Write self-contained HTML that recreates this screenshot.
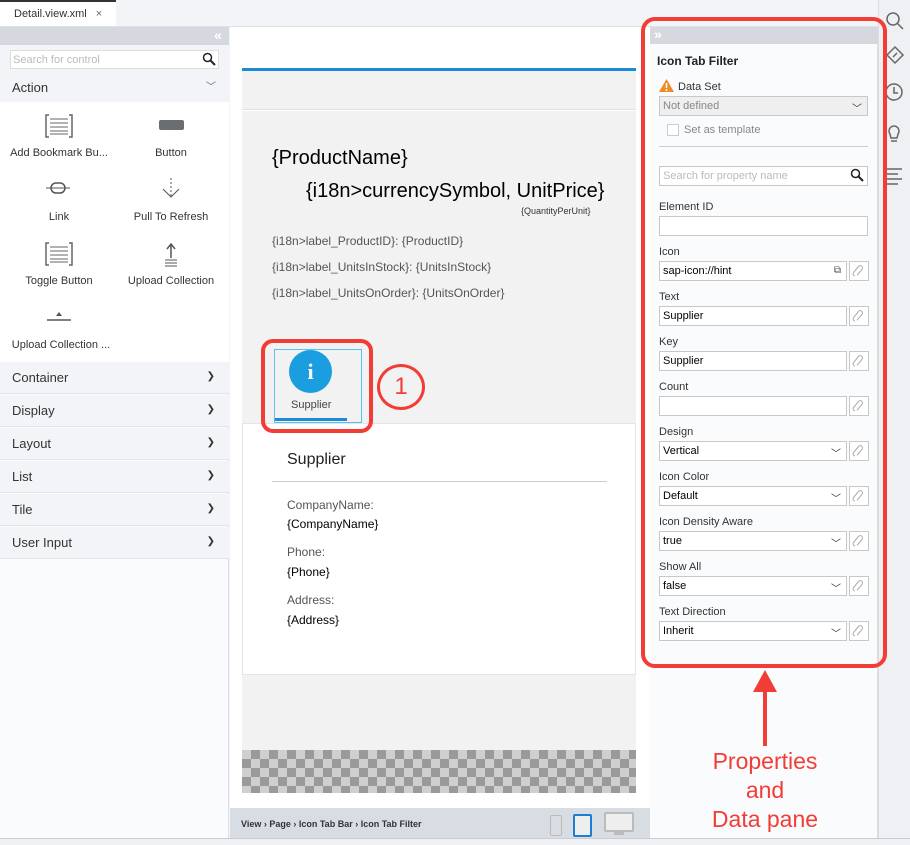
<!DOCTYPE html>
<html><head><style>
*{box-sizing:border-box;margin:0;padding:0}
body{width:910px;height:845px;position:relative;overflow:hidden;background:#f3f4f7;font-family:"Liberation Sans",sans-serif;color:#333}
.a{position:absolute}
.t11{font-size:11px}
.lbl{position:absolute;font-size:11px;color:#333}
.inp{position:absolute;height:20px;background:#fff;border:1px solid #c8c8c8;font-size:11px;padding:3px 3px;color:#000}
.chev{position:absolute;right:5px;top:3px;font-size:10px;color:#333}
.cat{position:absolute;left:0;width:229px;height:32px;background:#f2f4f7;border-bottom:1px solid #e2e4e8;font-size:13px;padding:8px 12px}
.cat span{position:absolute;right:14px;top:9px;font-size:10px}
.it{position:absolute;font-size:11px;text-align:center;width:112px}
</style></head><body>
<div class="a" style="left:0;top:0;width:116px;height:27px;background:#fff;border-top:2px solid #333"></div>
<div class="a t11" style="left:14px;top:8px">Detail.view.xml <span style="margin-left:6px;color:#666">×</span></div>
<div class="a" style="left:0;top:26px;width:878px;height:1px;background:#dde0e5"></div>
<div class="a" style="left:0;top:27px;width:229px;height:818px;background:#fafbfc;border-right:1px solid #dde"></div>
<div class="a" style="left:0;top:27px;width:229px;height:18px;background:#d5d9df"></div>
<div class="a" style="left:214px;top:27px;color:#fff;font-size:14px;font-weight:bold">«</div>
<div class="a" style="left:0;top:45px;width:229px;height:57px;background:#f2f4f7"></div>
<div class="a" style="left:10px;top:50px;width:209px;height:19px;background:#fff;border:1px solid #ddd;font-size:11px;color:#bbb;padding:3px 2px">Search for control</div>
<svg class="a" style="left:202px;top:52px" width="14" height="14"><circle cx="5.5" cy="5.5" r="4" fill="none" stroke="#222" stroke-width="1.5"/><path d="M8.5 8.5L13 13" stroke="#222" stroke-width="2"/></svg>
<div class="a" style="left:12px;top:80px;font-size:13px">Action</div>
<div class="a" style="left:206px;top:78px;font-size:10px;color:#666">﹀</div>
<div class="a" style="left:0;top:102px;width:229px;height:260px;background:#fff"></div>
<svg class="a" style="left:45px;top:114px" width="28" height="24"><path d="M4 1H1V23H4M24 1H27V23H24" fill="none" stroke="#666" stroke-width="1.5"/><path d="M5 5H23M5 9H23M5 13H23M5 17H23M5 20H23" stroke="#666"/></svg>
<div class="a" style="left:159px;top:120px;width:25px;height:10px;background:#6a6e73;border-radius:2px"></div>
<div class="it" style="left:3px;top:147px">Add Bookmark Bu...</div>
<div class="it" style="left:115px;top:147px">Button</div>
<svg class="a" style="left:45px;top:180px" width="26" height="16"><path d="M1 8H25" stroke="#555"/><rect x="6" y="3" width="14" height="10" rx="5" fill="none" stroke="#555" stroke-width="1.5"/></svg>
<svg class="a" style="left:160px;top:178px" width="22" height="24"><path d="M11 0V18" stroke="#555" stroke-dasharray="2 2"/><path d="M3 11L11 19L19 11" fill="none" stroke="#555"/></svg>
<div class="it" style="left:3px;top:211px">Link</div>
<div class="it" style="left:115px;top:211px">Pull To Refresh</div>
<svg class="a" style="left:45px;top:242px" width="28" height="24"><path d="M4 1H1V23H4M24 1H27V23H24" fill="none" stroke="#666" stroke-width="1.5"/><path d="M5 5H23M5 9H23M5 13H23M5 17H23M5 20H23" stroke="#666"/></svg>
<svg class="a" style="left:164px;top:243px" width="14" height="24"><path d="M7 2V15M3 6L7 1L11 6" fill="none" stroke="#555" stroke-width="1.5"/><path d="M1 17H13M1 20H13M1 23H13" stroke="#555"/></svg>
<div class="it" style="left:3px;top:275px">Toggle Button</div>
<div class="it" style="left:115px;top:275px">Upload Collection</div>
<svg class="a" style="left:46px;top:310px" width="26" height="12"><path d="M1 10H25" stroke="#555" stroke-width="1.5"/><path d="M13 2L10 6H16Z" fill="#555"/></svg>
<div class="it" style="left:3px;top:339px;width:116px">Upload Collection ...</div>
<div class="cat" style="top:362px">Container<span>❯</span></div>
<div class="cat" style="top:395px">Display<span>❯</span></div>
<div class="cat" style="top:428px">Layout<span>❯</span></div>
<div class="cat" style="top:461px">List<span>❯</span></div>
<div class="cat" style="top:494px">Tile<span>❯</span></div>
<div class="cat" style="top:527px">User Input<span>❯</span></div>
<div class="a" style="left:230px;top:27px;width:420px;height:781px;background:#fff"></div>
<div class="a" style="left:242px;top:68px;width:394px;height:3px;background:#1a8bd4"></div>
<div class="a" style="left:242px;top:71px;width:394px;height:39px;background:#f2f2f2;border-bottom:1px solid #e0e0e0"></div>
<div class="a" style="left:242px;top:111px;width:394px;height:312px;background:#f2f2f2"></div>
<div class="a" style="left:272px;top:147px;font-size:20px;color:#000">{ProductName}</div>
<div class="a" style="left:306px;top:180px;font-size:20px;color:#000">{i18n&gt;currencySymbol, UnitPrice}</div>
<div class="a" style="left:521px;top:206px;font-size:9px;color:#333">{QuantityPerUnit}</div>
<div class="a" style="left:272px;top:234px;font-size:12px;color:#555">{i18n&gt;label_ProductID}: {ProductID}</div>
<div class="a" style="left:272px;top:260px;font-size:12px;color:#555">{i18n&gt;label_UnitsInStock}: {UnitsInStock}</div>
<div class="a" style="left:272px;top:286px;font-size:12px;color:#555">{i18n&gt;label_UnitsOnOrder}: {UnitsOnOrder}</div>
<div class="a" style="left:274px;top:349px;width:88px;height:74px;border:1px solid #5ac0ee"></div>
<div class="a" style="left:289px;top:350px;width:43px;height:43px;border-radius:50%;background:#1a9ee0;color:#fff;font-weight:bold;font-size:22px;text-align:center;line-height:43px;font-family:'Liberation Serif',serif">i</div>
<div class="a" style="left:291px;top:399px;font-size:11px;color:#444">Supplier</div>
<div class="a" style="left:275px;top:418px;width:72px;height:3px;background:#1a8bd4"></div>
<div class="a" style="left:242px;top:423px;width:394px;height:252px;background:#fff;border:1px solid #e5e5e5"></div>
<div class="a" style="left:287px;top:451px;font-size:16px;color:#222">Supplier</div>
<div class="a" style="left:272px;top:481px;width:335px;height:1px;background:#ccc"></div>
<div class="a" style="left:287px;top:498px;font-size:12px;color:#555">CompanyName:</div>
<div class="a" style="left:287px;top:517px;font-size:12px;color:#000">{CompanyName}</div>
<div class="a" style="left:287px;top:545px;font-size:12px;color:#555">Phone:</div>
<div class="a" style="left:287px;top:565px;font-size:12px;color:#000">{Phone}</div>
<div class="a" style="left:287px;top:593px;font-size:12px;color:#555">Address:</div>
<div class="a" style="left:287px;top:613px;font-size:12px;color:#000">{Address}</div>
<div class="a" style="left:242px;top:675px;width:394px;height:75px;background:#f2f2f2"></div>
<div class="a" style="left:242px;top:750px;width:394px;height:43px;background-color:#cfcfcf;background-image:linear-gradient(45deg,#9a9a9a 25%,transparent 25%,transparent 75%,#9a9a9a 75%),linear-gradient(45deg,#9a9a9a 25%,transparent 25%,transparent 75%,#9a9a9a 75%);background-size:18px 18px;background-position:0 0,9px 9px"></div>
<div class="a" style="left:230px;top:808px;width:420px;height:30px;background:#d8dde3"></div>
<div class="a" style="left:241px;top:819px;font-size:9px;font-weight:bold;color:#333">View › Page › Icon Tab Bar › Icon Tab Filter</div>
<div class="a" style="left:550px;top:815px;width:12px;height:21px;border:1.5px solid #bbb;border-radius:2px"></div>
<div class="a" style="left:573px;top:814px;width:19px;height:23px;border:2px solid #1a7ed4;border-radius:2px;background:#eee"></div>
<div class="a" style="left:604px;top:812px;width:30px;height:20px;border:2px solid #bbb;border-radius:2px;background:#eee"></div>
<div class="a" style="left:614px;top:832px;width:10px;height:3px;background:#bbb"></div>
<div class="a" style="left:0;top:838px;width:910px;height:7px;background:#eef0f3;border-top:1px solid #ccc"></div>
<div class="a" style="left:650px;top:27px;width:228px;height:811px;background:#fafbfc;border-right:1px solid #ddd"></div>
<div class="a" style="left:650px;top:27px;width:228px;height:17px;background:#d5d9df"></div>
<div class="a" style="left:654px;top:26px;color:#fff;font-size:14px;font-weight:bold">»</div>
<div class="a" style="left:657px;top:54px;font-size:12px;font-weight:bold;color:#222">Icon Tab Filter</div>
<svg class="a" style="left:659px;top:79px" width="15" height="13"><path d="M7.5 0L15 13H0Z" fill="#f08a24"/><path d="M7.5 4V9M7.5 10V12" stroke="#fff" stroke-width="1.5"/></svg>
<div class="lbl" style="left:678px;top:81px">Data Set</div>
<div class="inp" style="left:659px;top:96px;width:209px;background:#efefef;color:#888">Not defined<span class="chev">﹀</span></div>
<div class="a" style="left:667px;top:124px;width:12px;height:12px;border:1px solid #ccc;background:#fff"></div>
<div class="lbl" style="left:684px;top:124px;color:#888">Set as template</div>
<div class="a" style="left:659px;top:146px;width:209px;height:1px;background:#ccc"></div>
<div class="inp" style="left:659px;top:166px;width:209px;color:#bbb">Search for property name</div>
<svg class="a" style="left:850px;top:168px" width="14" height="14"><circle cx="5.5" cy="5.5" r="4" fill="none" stroke="#222" stroke-width="1.5"/><path d="M8.5 8.5L13 13" stroke="#222" stroke-width="2"/></svg>
<div class="lbl" style="left:659px;top:201px">Element ID</div>
<div class="inp" style="left:659px;top:216px;width:209px"></div>
<div class="lbl" style="left:659px;top:246px">Icon</div><div class="inp" style="left:659px;top:261px;width:188px">sap-icon://hint<span class="chev" style="color:#555">⧉</span></div>
<div class="lbl" style="left:659px;top:291px">Text</div><div class="inp" style="left:659px;top:306px;width:188px">Supplier</div>
<div class="lbl" style="left:659px;top:336px">Key</div><div class="inp" style="left:659px;top:351px;width:188px">Supplier</div>
<div class="lbl" style="left:659px;top:381px">Count</div><div class="inp" style="left:659px;top:396px;width:188px"></div>
<div class="lbl" style="left:659px;top:426px">Design</div><div class="inp" style="left:659px;top:441px;width:188px">Vertical<span class="chev">﹀</span></div>
<div class="lbl" style="left:659px;top:471px">Icon Color</div><div class="inp" style="left:659px;top:486px;width:188px">Default<span class="chev">﹀</span></div>
<div class="lbl" style="left:659px;top:516px">Icon Density Aware</div><div class="inp" style="left:659px;top:531px;width:188px">true<span class="chev">﹀</span></div>
<div class="lbl" style="left:659px;top:561px">Show All</div><div class="inp" style="left:659px;top:576px;width:188px">false<span class="chev">﹀</span></div>
<div class="lbl" style="left:659px;top:606px">Text Direction</div><div class="inp" style="left:659px;top:621px;width:188px">Inherit<span class="chev">﹀</span></div>
<svg class="a" style="left:849px;top:261px" width="20" height="400">
<g fill="#fff" stroke="#c8c8c8"><rect x=".5" y=".5" width="19" height="19"/><rect x=".5" y="45.5" width="19" height="19"/><rect x=".5" y="90.5" width="19" height="19"/><rect x=".5" y="135.5" width="19" height="19"/><rect x=".5" y="180.5" width="19" height="19"/><rect x=".5" y="225.5" width="19" height="19"/><rect x=".5" y="270.5" width="19" height="19"/><rect x=".5" y="315.5" width="19" height="19"/><rect x=".5" y="360.5" width="19" height="19"/></g>
<g fill="none" stroke="#aaa" stroke-width="1">
<path d="M6 15a2.2 2.2 0 0 1 -1.5-3.5l5-6a2.2 2.2 0 0 1 3.5 2.8l-5 6"/>
<path transform="translate(0,45)" d="M6 15a2.2 2.2 0 0 1 -1.5-3.5l5-6a2.2 2.2 0 0 1 3.5 2.8l-5 6"/>
<path transform="translate(0,90)" d="M6 15a2.2 2.2 0 0 1 -1.5-3.5l5-6a2.2 2.2 0 0 1 3.5 2.8l-5 6"/>
<path transform="translate(0,135)" d="M6 15a2.2 2.2 0 0 1 -1.5-3.5l5-6a2.2 2.2 0 0 1 3.5 2.8l-5 6"/>
<path transform="translate(0,180)" d="M6 15a2.2 2.2 0 0 1 -1.5-3.5l5-6a2.2 2.2 0 0 1 3.5 2.8l-5 6"/>
<path transform="translate(0,225)" d="M6 15a2.2 2.2 0 0 1 -1.5-3.5l5-6a2.2 2.2 0 0 1 3.5 2.8l-5 6"/>
<path transform="translate(0,270)" d="M6 15a2.2 2.2 0 0 1 -1.5-3.5l5-6a2.2 2.2 0 0 1 3.5 2.8l-5 6"/>
<path transform="translate(0,315)" d="M6 15a2.2 2.2 0 0 1 -1.5-3.5l5-6a2.2 2.2 0 0 1 3.5 2.8l-5 6"/>
<path transform="translate(0,360)" d="M6 15a2.2 2.2 0 0 1 -1.5-3.5l5-6a2.2 2.2 0 0 1 3.5 2.8l-5 6"/>
</g></svg>
<div class="a" style="left:878px;top:0;width:32px;height:838px;background:#eef0f4;border-left:1px solid #ddd"></div>
<svg class="a" style="left:884px;top:10px" width="22" height="180" fill="none" stroke="#666" stroke-width="1.5">
<circle cx="9" cy="9" r="6"/><path d="M13 13L19 19"/>
<path d="M11 37L19 45L11 53L3 45Z"/><path d="M9 47L13 43"/>
<circle cx="10" cy="82" r="8"/><path d="M10 77V83H14"/>
<path d="M6 124a5 5 0 1 1 8 0l-1 4h-6z M7 131H13"/>
<path d="M3 159H18M3 164H14M3 169H18M3 174H14"/>
</svg>
<div class="a" style="left:641px;top:17px;width:246px;height:651px;border:4px solid #f23c36;border-radius:14px"></div>
<div class="a" style="left:261px;top:339px;width:112px;height:94px;border:4px solid #f23c36;border-radius:12px"></div>
<div class="a" style="left:377px;top:364px;width:48px;height:46px;border:3px solid #f23c36;border-radius:50%;color:#f23c36;font-size:24px;text-align:center;line-height:40px">1</div>
<div class="a" style="left:763px;top:688px;width:4px;height:58px;background:#f23c36"></div>
<svg class="a" style="left:753px;top:670px" width="24" height="22"><path d="M12 0L24 22H0Z" fill="#f23c36"/></svg>
<div class="a" style="left:690px;top:747px;width:150px;text-align:center;font-size:23px;line-height:29px;color:#f23c36">Properties<br>and<br>Data pane</div>
</body></html>
